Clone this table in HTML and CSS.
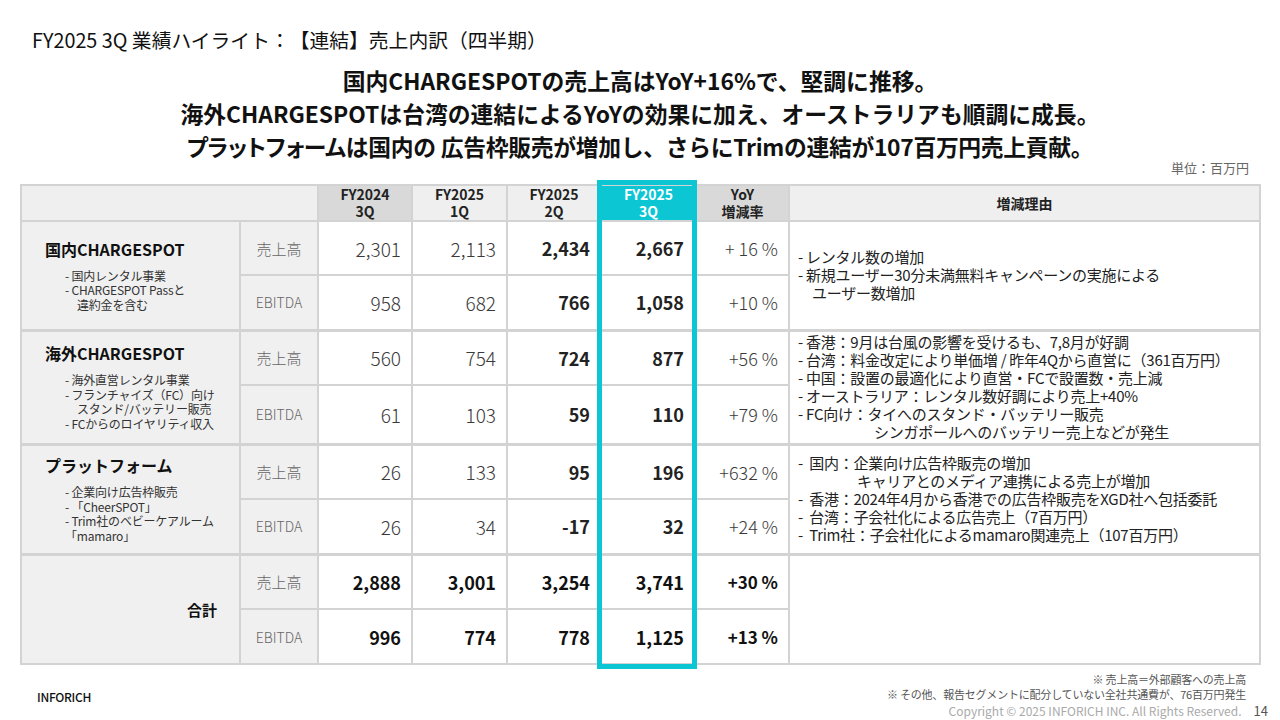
FILE: index.html
```html
<!DOCTYPE html>
<html lang="ja">
<head>
<meta charset="utf-8">
<title>FY2025 3Q 業績ハイライト</title>
<link rel="stylesheet" href="styles.css">
</head>
<body>
<div class="slide">
  <h1 class="title">FY2025 3Q 業績ハイライト：【連結】売上内訳（四半期）</h1>
  <div class="headline">
    <p>国内CHARGESPOTの売上高はYoY+16%で、堅調に推移。</p>
    <p>海外CHARGESPOTは台湾の連結によるYoYの効果に加え、オーストラリアも順調に成長。</p>
    <p class="hl-tight"><span class="prop">プラットフォーム</span>は国内の 広告枠販売が増加し、さらにTrimの連結が107百万円売上貢献。</p>
  </div>
  <div class="unit">単位：百万円</div>

  <div class="table-wrap">
    <table class="fin">
      <colgroup>
        <col class="c-seg"><col class="c-lbl"><col class="c-num"><col class="c-num2"><col class="c-num"><col class="c-num2"><col class="c-yoy"><col class="c-reason">
      </colgroup>
      <thead>
        <tr class="hrow">
          <th colspan="2" class="h-light"></th>
          <th class="h-dark">FY2024<br>3Q</th>
          <th class="h-light">FY2025<br>1Q</th>
          <th class="h-light">FY2025<br>2Q</th>
          <th class="h-cur">FY2025<br>3Q</th>
          <th class="h-dark">YoY<br>増減率</th>
          <th class="h-light">増減理由</th>
        </tr>
      </thead>
      <tbody>
        <tr class="r54">
          <td rowspan="2" class="seg">
            <div class="seg-name">国内CHARGESPOT</div>
            <div class="seg-list">
              <div>- 国内レンタル事業</div>
              <div>- CHARGESPOT Passと</div>
              <div class="cont">違約金を含む</div>
            </div>
          </td>
          <td class="lbl">売上高</td>
          <td class="num">2,301</td>
          <td class="num">2,113</td>
          <td class="num b">2,434</td>
          <td class="num b cur">2,667</td>
          <td class="num yoy">+ 16 %</td>
          <td rowspan="2" class="reason">
            <div>- レンタル数の増加</div>
            <div>- 新規ユーザー30分未満無料キャンペーンの実施による</div>
            <div class="ind1">ユーザー数増加</div>
          </td>
        </tr>
        <tr class="r55">
          <td class="lbl ebitda">EBITDA</td>
          <td class="num">958</td>
          <td class="num">682</td>
          <td class="num b">766</td>
          <td class="num b cur">1,058</td>
          <td class="num yoy">+10 %</td>
        </tr>

        <tr class="r55 seg-top">
          <td rowspan="2" class="seg">
            <div class="seg-name">海外CHARGESPOT</div>
            <div class="seg-list">
              <div>- 海外直営レンタル事業</div>
              <div>- フランチャイズ（FC）向け</div>
              <div class="cont">スタンド/バッテリー販売</div>
              <div>- FCからのロイヤリティ収入</div>
            </div>
          </td>
          <td class="lbl">売上高</td>
          <td class="num">560</td>
          <td class="num">754</td>
          <td class="num b">724</td>
          <td class="num b cur">877</td>
          <td class="num yoy">+56 %</td>
          <td rowspan="2" class="reason">
            <div>- 香港：9月は台風の影響を受けるも、7,8月が好調</div>
            <div>- 台湾：料金改定により単価増 / 昨年4Qから直営に（361百万円）</div>
            <div>- 中国：設置の最適化により直営・FCで設置数・売上減</div>
            <div>- オーストラリア：レンタル数好調により売上+40%</div>
            <div>- FC向け：タイへのスタンド・バッテリー販売</div>
            <div class="ind2">シンガポールへのバッテリー売上などが発生</div>
          </td>
        </tr>
        <tr class="r60">
          <td class="lbl ebitda">EBITDA</td>
          <td class="num">61</td>
          <td class="num">103</td>
          <td class="num b">59</td>
          <td class="num b cur">110</td>
          <td class="num yoy">+79 %</td>
        </tr>

        <tr class="r55 seg-top">
          <td rowspan="2" class="seg">
            <div class="seg-name">プラットフォーム</div>
            <div class="seg-list">
              <div>- 企業向け広告枠販売</div>
              <div>- 「CheerSPOT」</div>
              <div>- Trim社のベビーケアルーム</div>
              <div>「mamaro」</div>
            </div>
          </td>
          <td class="lbl">売上高</td>
          <td class="num">26</td>
          <td class="num">133</td>
          <td class="num b">95</td>
          <td class="num b cur">196</td>
          <td class="num yoy">+632 %</td>
          <td rowspan="2" class="reason">
            <div>-&nbsp;&nbsp;国内：企業向け広告枠販売の増加</div>
            <div class="ind3">キャリアとのメディア連携による売上が増加</div>
            <div>-&nbsp;&nbsp;香港：2024年4月から香港での広告枠販売をXGD社へ包括委託</div>
            <div>-&nbsp;&nbsp;台湾：子会社化による広告売上（7百万円）</div>
            <div>-&nbsp;&nbsp;Trim社：子会社化によるmamaro関連売上（107百万円）</div>
          </td>
        </tr>
        <tr class="r55">
          <td class="lbl ebitda">EBITDA</td>
          <td class="num">26</td>
          <td class="num">34</td>
          <td class="num b">-17</td>
          <td class="num b cur">32</td>
          <td class="num yoy">+24 %</td>
        </tr>

        <tr class="r55 seg-top total">
          <td rowspan="2" class="seg seg-total">合計</td>
          <td class="lbl">売上高</td>
          <td class="num b">2,888</td>
          <td class="num b">3,001</td>
          <td class="num b">3,254</td>
          <td class="num b cur">3,741</td>
          <td class="num b yoy">+30 %</td>
          <td rowspan="2" class="reason"></td>
        </tr>
        <tr class="r55 total">
          <td class="lbl ebitda">EBITDA</td>
          <td class="num b">996</td>
          <td class="num b">774</td>
          <td class="num b">778</td>
          <td class="num b cur">1,125</td>
          <td class="num b yoy">+13 %</td>
        </tr>
      </tbody>
    </table>
    <div class="cur-box" aria-hidden="true"></div>
  </div>

  <footer class="foot">
    <div class="brand">INFORICH</div>
    <div class="notes">
      <p class="note">※ 売上高＝外部顧客への売上高</p>
      <p class="note">※ その他、報告セグメントに配分していない全社共通費が、76百万円発生</p>
      <p class="copy"><span class="copy-text">Copyright © 2025 INFORICH INC. All Rights Reserved.</span><span class="page">14</span></p>
    </div>
  </footer>
</div>
</body>
</html>
```

FILE: styles.css
```css
* {
  box-sizing: border-box;
  margin: 0;
  padding: 0;
}

html, body {
  width: 1280px;
  height: 720px;
  overflow: hidden;
  background: #ffffff;
}

body {
  font-family: "Noto Sans CJK JP", "Noto Sans", "Liberation Sans", sans-serif;
  color: #1a1a1a;
  text-spacing-trim: space-all;
}

.slide {
  width: 1280px;
  height: 720px;
  display: flex;
  flex-direction: column;
}

.title {
  font-size: 19.8px;
  font-weight: 400;
  line-height: 24px;
  margin: 28px 0 0 32px;
  color: #111;
}

.headline {
  margin-top: 12px;
  text-align: center;
  font-weight: 700;
  font-size: 22.8px;
  line-height: 33px;
  color: #111;
}

.hl-tight {
  letter-spacing: -0.3px;
}

.prop {
  font-feature-settings: "palt";
}

.unit {
  align-self: flex-end;
  margin: -3px 31px 0 0;
  font-size: 13px;
  line-height: 16px;
  color: #666;
}

.table-wrap {
  position: relative;
  margin: 8px 0 0 20px;
  width: 1239px;
}

.fin {
  width: 1239px;
  table-layout: fixed;
  border-collapse: collapse;
}

.c-seg { width: 219px; }
.c-lbl { width: 78px; }
.c-num { width: 94px; }
.c-num2 { width: 95px; }
.c-yoy { width: 93px; }
.c-reason { width: 471px; }

.fin th,
.fin td {
  border: 2px solid #d3d3d3;
}

.hrow { height: 34px; }

.fin th {
  font-size: 14px;
  font-weight: 700;
  line-height: 17px;
  color: #222;
  text-align: center;
  vertical-align: middle;
}

.h-light { background: #efefef; }
.h-dark { background: #d9d9d9; }
.h-cur { background: #0cc6d4; color: #ffffff !important; }

.r54 { height: 54px; }
.r55 { height: 55px; }
.r60 { height: 59px; }

.seg-top td { border-top-width: 3px; }

.seg {
  background: #f0f0f0;
  padding-left: 23px;
  vertical-align: middle;
}

.seg-name {
  font-size: 16px;
  font-weight: 700;
  line-height: 20px;
  margin-bottom: 10px;
  color: #111;
}

.seg-list {
  margin-left: 20px;
  font-size: 12px;
  line-height: 14.5px;
  color: #333;
  letter-spacing: -0.2px;
}

.seg-list .cont {
  padding-left: 12px;
}

.seg-total {
  text-align: right;
  padding-right: 22px;
  font-size: 15px;
  font-weight: 700;
  color: #111;
}

.lbl {
  background: #f0f0f0;
  text-align: center;
  vertical-align: middle;
  font-size: 15px;
  font-weight: 300;
  color: #666;
}

.lbl.ebitda {
  font-size: 14px;
}

.num {
  text-align: right;
  vertical-align: middle;
  padding-right: 10px;
  font-size: 19px;
  font-weight: 300;
  color: #3a3a3a;
  background: #ffffff;
}

.num.b {
  font-weight: 700;
  font-size: 18px;
  color: #222;
}

.num.cur {
  padding-right: 11px;
}

.num.yoy {
  font-size: 18px;
}

.num.b.yoy {
  font-size: 17px;
}

.total .num.b {
  color: #111;
}

.reason {
  background: #ffffff;
  vertical-align: middle;
  padding-left: 8px;
  font-size: 15px;
  line-height: 18px;
  color: #222;
  letter-spacing: -0.25px;
}

.reason .ind1 { padding-left: 14px; }
.reason .ind2 { padding-left: 76px; }
.reason .ind3 { padding-left: 59px; }

.cur-box {
  position: absolute;
  left: 577px;
  top: -4px;
  bottom: -4px;
  width: 100px;
  border: 5px solid #0cc6d4;
  pointer-events: none;
}

.foot {
  display: flex;
  justify-content: space-between;
  margin-top: 7px;
}

.brand {
  padding: 17px 0 0 37px;
  font-size: 12px;
  line-height: 16px;
  font-weight: 500;
  color: #111;
  letter-spacing: -0.3px;
}

.notes {
  display: flex;
  flex-direction: column;
  align-items: flex-end;
  padding-right: 12px;
}

.note {
  font-size: 11px;
  line-height: 15px;
  color: #555;
  margin-right: 22px;
  letter-spacing: -0.2px;
}

.copy {
  display: flex;
  align-items: baseline;
  gap: 12px;
  font-size: 12px;
  line-height: 17px;
  color: #aaaaaa;
}

.page {
  font-size: 13px;
  color: #555;
}
```
